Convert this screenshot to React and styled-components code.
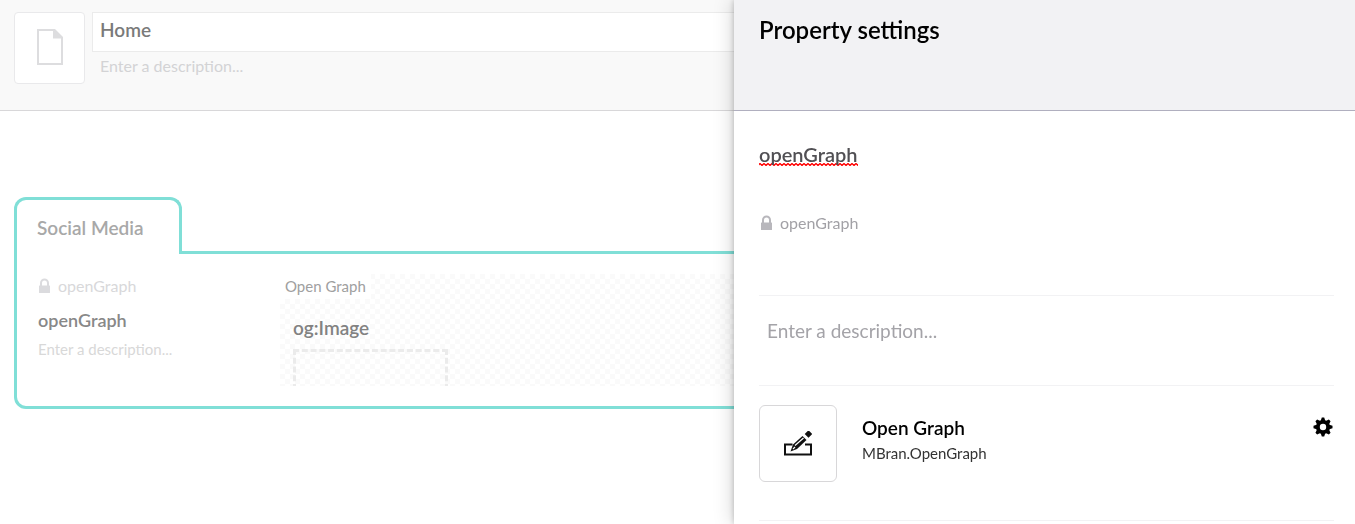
import React from "react";
import styled, { createGlobalStyle } from "styled-components";

const GlobalStyle = createGlobalStyle`
  *, *::before, *::after { box-sizing: border-box; }
  body { margin: 0; background: #fff; }
  body, input, button { font-family: Lato, "Open Sans", sans-serif; }
  h1, h2, h3, p { margin: 0; }
`;

const Page = styled.div`
  min-height: 100vh;
  overflow: hidden;
`;

const Header = styled.header`
  display: flex;
  gap: 7px;
  padding: 12px 20px 26px 14px;
  background: #f9f9f9;
  border-bottom: 1px solid #d8d7d9;
`;

const IconButton = styled.button`
  display: flex;
  align-items: center;
  justify-content: center;
  flex: none;
  width: ${(p) => p.$width}px;
  height: ${(p) => p.$height}px;
  padding: 0;
  background: #fff;
  border: 1px solid ${(p) => p.$border};
  border-radius: ${(p) => p.$radius}px;
`;

const DocumentButton = styled(IconButton)`
  padding-bottom: 2px;
`;

const HeaderFields = styled.div`
  display: flex;
  flex: 1;
  flex-direction: column;
  gap: 4px;
`;

const TextInput = styled.input`
  display: block;
  min-width: 0;
  width: 100%;
  height: ${(p) => p.$height}px;
  padding: 0 ${(p) => p.$inset || 0}px;
  background: transparent;
  border: 0;
  outline: 0;
  color: ${(p) => p.$color};
  font-size: ${(p) => p.$size}px;
  font-weight: ${(p) => p.$weight || 400};
  &::placeholder { color: ${(p) => p.$color}; opacity: 1; }
`;

const NameInput = styled(TextInput)`
  background: #fff;
  border: 1px solid #ebebeb;
  padding-bottom: 5px;
`;

const DescriptionInput = styled(TextInput)`
  padding-bottom: 4px;
`;

const squiggle = `url("data:image/svg+xml,%3Csvg xmlns='http://www.w3.org/2000/svg' width='4' height='3'%3E%3Cpath d='M-1 3L1 1L3 3L5 1' transform='translate(0 -.5)' fill='none' stroke='%23f00' stroke-width='1.3'/%3E%3C/svg%3E")`;

const MisspelledInput = styled(TextInput)`
  field-sizing: content;
  width: auto;
  background: ${squiggle} repeat-x 0 100%;
`;

const Main = styled.main`
  padding: 86px 20px 40px 14px;
`;

const Tab = styled.h2`
  position: relative;
  width: 168px;
  height: 57px;
  margin-bottom: -3px;
  padding: 0 20px;
  background: #fff;
  border: 3px solid #80dfd7;
  border-bottom: 0;
  border-radius: 12px 12px 0 0;
  color: #a8a8a8;
  font-size: 19px;
  font-weight: 600;
  line-height: 56px;
  white-space: nowrap;
`;

const Group = styled.section`
  display: flex;
  gap: 42px;
  padding: 20px;
  border: 3px solid #80dfd7;
  border-radius: 0 12px 12px 12px;
`;

const PropertyMeta = styled.div`
  display: flex;
  flex: none;
  flex-direction: column;
  width: 201px;
  padding-left: 1px;
`;

const Alias = styled.p`
  display: flex;
  align-items: center;
  gap: 7px;
  color: ${(p) => p.$color};
  font-size: 16px;
  line-height: 24px;
`;

const PanelAlias = styled(Alias)`
  padding: 45px 0 0 1px;
`;

const PropertyName = styled.h3`
  padding: 11px 0 6px;
  color: #888;
  font-size: 18px;
  font-weight: 600;
  line-height: 22px;
`;

const Preview = styled.div`
  flex: 1;
  height: 112px;
  overflow: hidden;
  background: repeating-conic-gradient(#fff 0 25%, #fafafa 0 50%) 0 0 / 10px 10px;
`;

const PreviewLabel = styled.p`
  width: max-content;
  padding: 0 5px;
  background: #fff;
  color: #a0a0a0;
  font-size: 15px;
  line-height: 25px;
`;

const PreviewBody = styled.div`
  padding: 17px 13px;
`;

const PreviewTitle = styled.h3`
  color: #828282;
  font-size: 19px;
  font-weight: 600;
  line-height: 24px;
`;

const DropZone = styled.div`
  width: 155px;
  height: 155px;
  margin-top: 9px;
  border: 3px dashed #ebebeb;
`;

const Panel = styled.aside`
  position: fixed;
  top: 0;
  right: 0;
  bottom: 0;
  width: 621px;
  overflow: hidden;
  background: #fff;
  box-shadow: 0 0 20px rgba(0, 0, 0, 0.19), 0 0 6px rgba(0, 0, 0, 0.23);
`;

const PanelHeader = styled.header`
  height: 111px;
  padding: 16px 25px;
  background: #f2f2f4;
  border-bottom: 1px solid #b0afbf;
`;

const PanelTitle = styled.h1`
  color: #000;
  font-size: 24px;
  font-weight: 600;
  line-height: 28px;
`;

const PanelBody = styled.form`
  padding: 0 21px 0 25px;
`;

const Section = styled.div`
  padding: ${(p) => p.$pad};
  border-bottom: 1px solid #f2f2f4;
`;

const EditorRow = styled(Section)`
  display: flex;
  align-items: flex-start;
  gap: 25px;
`;

const EditorText = styled.div`
  flex: 1;
  padding-top: 10px;
`;

const EditorName = styled.h2`
  color: #000;
  font-size: 19px;
  font-weight: 600;
  line-height: 26px;
`;

const EditorAlias = styled.p`
  color: #333;
  font-size: 15px;
  line-height: 24px;
`;

const GearButton = styled.button`
  display: flex;
  margin-top: 12px;
  padding: 0;
  background: none;
  border: 0;
`;

const LockIcon = ({ color }) => (
  <svg width="13" height="16" viewBox="0 0 13 16" aria-hidden="true">
    <path d="M3 8V5a3.500 3.500 0 0 1 7 0V8" fill="none" stroke={color} strokeWidth="2" />
    <rect x="1" y="7.500" width="11" height="7.500" rx="0.500" fill={color} />
  </svg>
);

const DocumentIcon = () => (
  <svg width="26" height="36" viewBox="0 0 26 36" aria-hidden="true">
    <path d="M0 0h18l8 8v28H0zM2 2v32h22V9.500h-8V2z" fill="#dddddf" fillRule="evenodd" />
  </svg>
);

const EditIcon = () => (
  <svg width="28" height="25" viewBox="0 0 28 25" aria-hidden="true">
    <path d="M8.500 13.500H1v10h26v-10h-6" fill="none" stroke="#111" strokeWidth="2" />
    <path d="M6.500 20.500l2.500-7 9.500-8.500 4 4-9.500 9z" fill="#111" />
    <path d="M11 14.500l8.500-7.500M9 18l2-2" stroke="#fff" strokeWidth="1.200" />
    <path d="M24.500 0.500l2.500 2.500-2.500 2.500-2.500-2.500z" fill="#111" stroke="#111" strokeWidth="1.800" />
  </svg>
);

const GearIcon = () => (
  <svg width="21" height="20" viewBox="-10 -10 21 20" aria-hidden="true">
    {[0, 45, 90, 135].map((a) => (
      <path
        key={a}
        d="M-1.200-9.500h2.400l1.300 4h-5zM-1.200 9.500h2.400l1.300-4h-5z"
        transform={`rotate(${a})`}
      />
    ))}
    <circle r="5.100" fill="none" stroke="#000" strokeWidth="3.800" />
  </svg>
);

export default function App() {
  return (
    <>
      <GlobalStyle />
      <Page>
        <Header>
          <DocumentButton type="button" aria-label="Choose icon" $width={71} $height={72} $border="#e9e9eb" $radius={4}>
            <DocumentIcon />
          </DocumentButton>
          <HeaderFields>
            <NameInput aria-label="Name" defaultValue="Home" $height={40} $inset={7} $size={19} $weight={600} $color="#7a7a7a" />
            <DescriptionInput aria-label="Description" placeholder="Enter a description..." $height={22} $inset={8} $size={16} $color="#d3d3d5" />
          </HeaderFields>
        </Header>
        <Main>
          <Tab>Social Media</Tab>
          <Group>
            <PropertyMeta>
              <Alias $color="#d8d8da"><LockIcon color="#dbdbde" />openGraph</Alias>
              <PropertyName>openGraph</PropertyName>
              <TextInput aria-label="Property description" placeholder="Enter a description..." $height={24} $size={15} $color="#d8d8d8" />
            </PropertyMeta>
            <Preview>
              <PreviewLabel>Open Graph</PreviewLabel>
              <PreviewBody>
                <PreviewTitle>og:Image</PreviewTitle>
                <DropZone />
              </PreviewBody>
            </Preview>
          </Group>
        </Main>
      </Page>
      <Panel>
        <PanelHeader>
          <PanelTitle>Property settings</PanelTitle>
        </PanelHeader>
        <PanelBody>
          <Section $pad="30px 0 60px">
            <MisspelledInput aria-label="Property name" defaultValue="openGraph" spellCheck={false} $height={25} $size={20} $weight={600} $color="#515054" />
            <PanelAlias $color="#a2a1a6"><LockIcon color="#b8b7bc" />openGraph</PanelAlias>
          </Section>
          <Section $pad="18px 0 39px">
            <TextInput aria-label="Property description" placeholder="Enter a description..." $height={32} $inset={8} $size={19} $color="#a4a3a8" />
          </Section>
          <EditorRow $pad="19px 0 38px">
            <IconButton type="button" aria-label="Change editor" $width={78} $height={77} $border="#d8d7d9" $radius={6}>
              <EditIcon />
            </IconButton>
            <EditorText>
              <EditorName>Open Graph</EditorName>
              <EditorAlias>MBran.OpenGraph</EditorAlias>
            </EditorText>
            <GearButton type="button" aria-label="Editor settings"><GearIcon /></GearButton>
          </EditorRow>
        </PanelBody>
      </Panel>
    </>
  );
}
